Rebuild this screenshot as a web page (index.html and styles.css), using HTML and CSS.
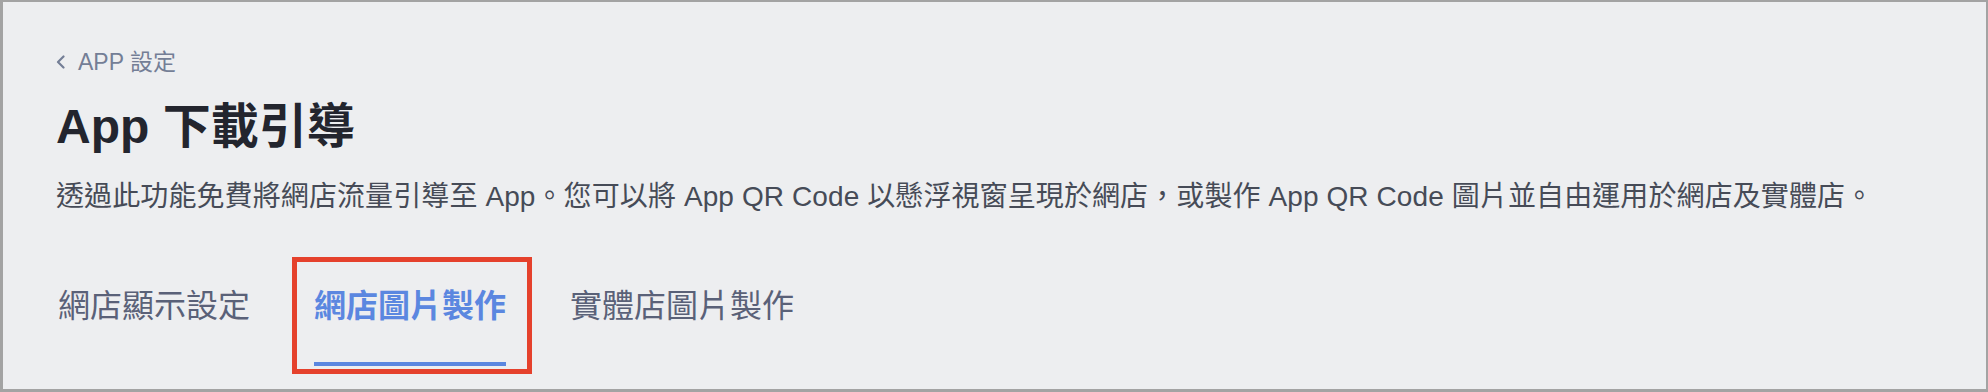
FILE: index.html
```html
<!doctype html>
<html>
<head>
<meta charset="utf-8">
<meta name="viewport" content="width=device-width, initial-scale=1.0">
<link rel="stylesheet" href="styles.css">
<title>App 下載引導</title>
</head>
<body>
<div class="page">
  <a class="back" href="#">
    <svg class="chev" width="10" height="14" viewBox="0 0 10 14"><polyline points="7.5,1.5 2,7 7.5,12.5" fill="none" stroke="currentColor" stroke-width="2.2" stroke-linecap="round" stroke-linejoin="round"/></svg>
    <span>APP 設定</span>
  </a>
  <h1 class="title">App 下載引導</h1>
  <p class="desc">透過此功能免費將網店流量引導至 App。您可以將 App QR Code 以懸浮視窗呈現於網店，或製作 App QR Code 圖片並自由運用於網店及實體店。</p>
  <div class="tabs">
    <a class="tab" href="#">網店顯示設定</a>
    <a class="tab active" href="#">網店圖片製作</a>
    <a class="tab" href="#">實體店圖片製作</a>
  </div>
</div>
</body>
</html>
```

FILE: styles.css
```css
html, body {
    margin: 0;
    padding: 0;
}
body {
    font-family: "Liberation Sans", "Noto Sans CJK TC", sans-serif;
    background: #ffffff;
}
.page {
    box-sizing: border-box;
    height: 392px;
    border-style: solid;
    border-color: #a3a3a3;
    border-width: 2px 2px 3px 3px;
    background-color: #edeef0;
    padding: 46px 0 0 53px;
}
.back {
    display: flex;
    align-items: center;
    gap: 12px;
    font-size: 23px;
    line-height: 28px;
    color: #747e96;
    text-decoration: none;
}
.chev {
    display: block;
}
.title {
    margin: 19px 0 0;
    font-size: 48px;
    line-height: 64px;
    font-weight: 700;
    color: #23252e;
}
.desc {
    margin: 18px 0 0;
    font-size: 28px;
    line-height: 40px;
    letter-spacing: 0.1px;
    color: #464b57;
}
.tabs {
    display: flex;
    gap: 64px;
    margin-top: 67px;
    padding-left: 2px;
}
.tab {
    position: relative;
    display: block;
    font-size: 32px;
    line-height: 44px;
    padding-bottom: 34px;
    border-bottom: 4px solid transparent;
    color: #5a6178;
    text-decoration: none;
}
.tab.active {
    color: #5b87e0;
    font-weight: 700;
    border-bottom-color: #5b87e0;
}
.tab.active::after {
    content: "";
    position: absolute;
    top: -27px;
    bottom: -12px;
    left: -22px;
    right: -26px;
    border: 5px solid #e5412c;
}
```
